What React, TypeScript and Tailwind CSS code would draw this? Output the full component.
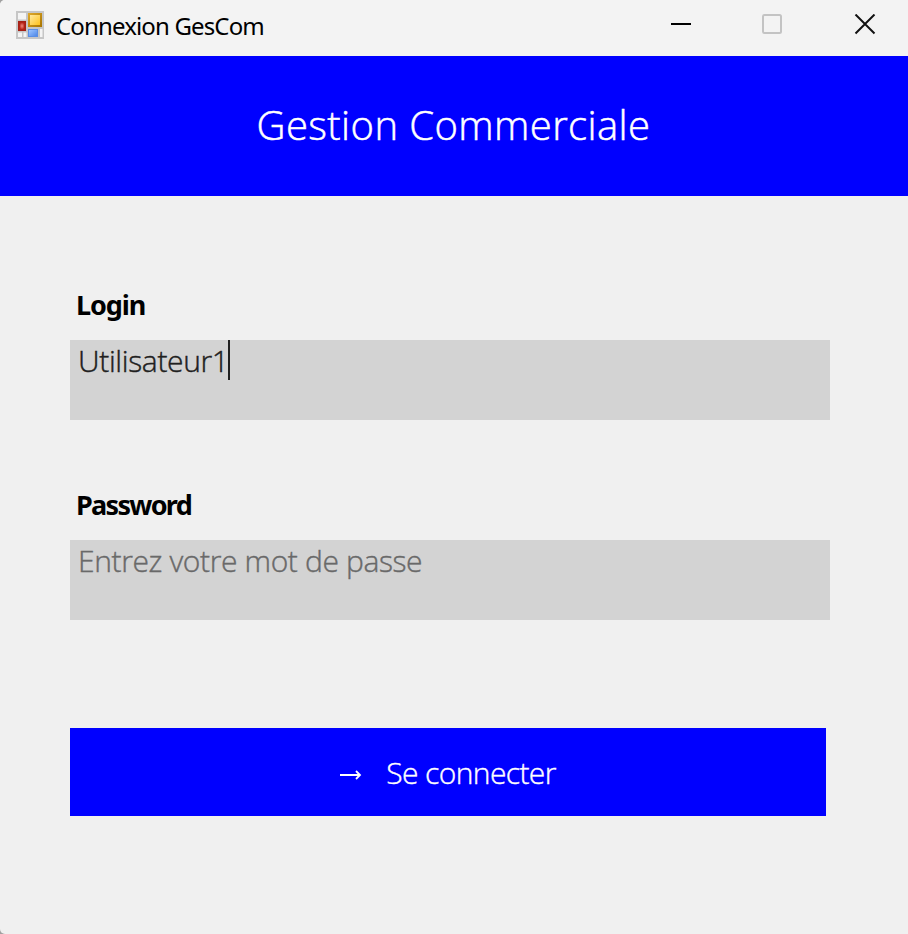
import { useState } from "react";

function FormIcon() {
  return (
    <svg width="28" height="28" viewBox="0 0 28 28">
      <defs>
        <linearGradient id="gold" x1="0" y1="0" x2="1" y2="1">
          <stop offset="0" stopColor="#e0a92a" />
          <stop offset="1" stopColor="#a87400" />
        </linearGradient>
        <linearGradient id="yellow" x1="0" y1="0" x2="1" y2="1">
          <stop offset="0" stopColor="#ffe9a0" />
          <stop offset="1" stopColor="#ffc21c" />
        </linearGradient>
        <radialGradient id="red">
          <stop offset="0" stopColor="#f08a80" />
          <stop offset="1" stopColor="#b8281c" />
        </radialGradient>
        <linearGradient id="blue" x1="0" y1="0" x2="1" y2="1">
          <stop offset="0" stopColor="#9cc4ff" />
          <stop offset="1" stopColor="#4f88e8" />
        </linearGradient>
      </defs>
      <rect width="28" height="28" fill="#c6c6c6" />
      <rect x="2" y="2" width="8" height="6.5" fill="#f4f4f4" />
      <rect x="2" y="10" width="8" height="10" fill="#a52015" />
      <rect x="3.5" y="11.5" width="5" height="7" fill="url(#red)" />
      <rect x="2" y="21.5" width="4" height="4.5" fill="#f4f4f4" />
      <rect x="7.5" y="21.5" width="3" height="4.5" fill="#f4f4f4" />
      <rect x="12" y="2" width="14" height="14" fill="url(#gold)" />
      <rect x="14" y="4" width="10" height="10" fill="url(#yellow)" />
      <rect x="12" y="18" width="10" height="8" fill="#5b8ee4" />
      <rect x="13" y="19" width="8" height="6" fill="url(#blue)" />
      <rect x="24" y="18" width="2.5" height="8" fill="#f4f4f4" />
    </svg>
  );
}

function TitleBar() {
  return (
    <header className="flex h-14 items-start bg-[#f3f3f3] pl-4">
      <div className="pt-[11px]">
        <FormIcon />
      </div>
      <span className="ml-3 pt-2 text-[24px] leading-[36px] tracking-[-0.85px] text-black">
        Connexion GesCom
      </span>
      <div className="ml-auto flex pt-3.5 pr-8">
        <button aria-label="Minimize" className="mr-[70px]">
          <svg width="22" height="22" viewBox="0 0 22 22">
            <path d="M2 10H22" stroke="#000" strokeWidth="2" />
          </svg>
        </button>
        <button aria-label="Maximize" disabled className="mr-[71px]">
          <svg width="22" height="22" viewBox="0 0 22 22" fill="none">
            <rect x="2" y="1" width="18" height="18" rx="1.5" stroke="#c3c3c3" strokeWidth="2" />
          </svg>
        </button>
        <button aria-label="Close">
          <svg width="22" height="22" viewBox="0 0 22 22">
            <path d="M1.5 0.5L20.5 19.5M20.5 0.5L1.5 19.5" stroke="#111" strokeWidth="2" />
          </svg>
        </button>
      </div>
    </header>
  );
}

export default function App() {
  const [login, setLogin] = useState("Utilisateur1");
  const [password, setPassword] = useState("");

  return (
    <div className="h-[934px] w-[908px] bg-[#a0a0a0]">
      <div className="flex h-full flex-col overflow-hidden rounded-l-[5px] bg-[#f0f0f0] font-['Noto_Sans',sans-serif]">
        <TitleBar />
        <div className="flex h-[140px] items-center justify-center bg-[#0000ff]">
          <h1 className="pr-px pb-0.5 font-['Open_Sans',sans-serif] text-[40px] font-light tracking-[0.4px] text-white [-webkit-text-stroke:0.5px_#fff]">
            Gestion Commerciale
          </h1>
        </div>
        <form className="flex flex-col px-[70px] pt-[88px]" onSubmit={(e) => e.preventDefault()}>
          <label htmlFor="login" className="h-14 pl-1.5 text-[27px] leading-[41px] font-bold tracking-[-1.1px] text-black">
            Login
          </label>
          <div className="relative h-20 w-[760px] bg-[#d3d3d3]">
            <input
              id="login"
              value={login}
              onChange={(e) => setLogin(e.target.value)}
              className="block h-[42px] w-full pl-2 font-['Open_Sans',sans-serif] text-[30px] leading-[42px] font-light tracking-[-0.35px] text-[#202020] caret-transparent outline-none [-webkit-text-stroke:0.4px_#202020]"
            />
            <span className="absolute top-0 left-[158px] h-10 w-0.5 bg-[#202020]" />
          </div>
          <label htmlFor="password" className="mt-16 h-14 pl-1.5 text-[27px] leading-[41px] font-bold tracking-[-1.7px] text-black">
            Password
          </label>
          <div className="h-20 w-[760px] bg-[#d3d3d3]">
            <input
              id="password"
              type="password"
              placeholder="Entrez votre mot de passe"
              value={password}
              onChange={(e) => setPassword(e.target.value)}
              className="block h-[42px] w-full pl-2 font-['Open_Sans',sans-serif] text-[30px] leading-[42px] font-light tracking-[-0.38px] outline-none [-webkit-text-stroke:0.4px_#696969] placeholder:text-[#696969]"
            />
          </div>
          <button className="mt-[108px] flex h-[88px] w-[756px] items-center justify-center bg-[#0000ff] font-['Open_Sans',sans-serif] text-[30px] font-light tracking-[-0.6px] text-white [-webkit-text-stroke:0.4px_#fff]">
            <svg width="22" height="12" viewBox="0 0 22 12" fill="none" stroke="#fff" strokeWidth="1.8" className="mt-1 mr-6">
              <path d="M0 7H20M16 3L20 7L16 11" />
            </svg>
            <span>Se connecter</span>
          </button>
        </form>
      </div>
    </div>
  );
}
